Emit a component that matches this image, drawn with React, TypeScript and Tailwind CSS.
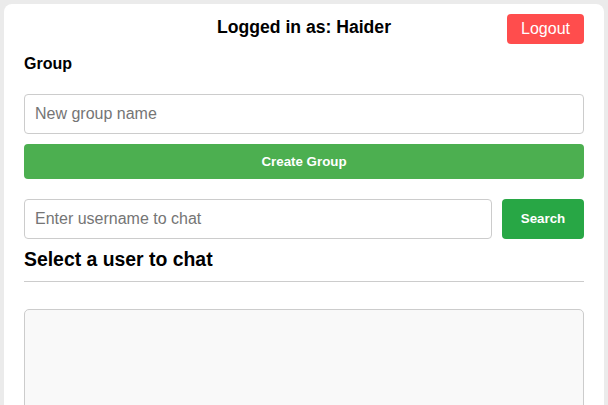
export default function App() {
  return (
    <div className="h-[405px] overflow-hidden bg-[#ebebeb] px-[4px] pt-[4px]" style={{ fontFamily: '"Liberation Sans", Arial, sans-serif' }}>
      <div className="h-[401px] rounded-t-[8px] bg-white px-[20px] pt-[10px]">
        <div className="grid grid-cols-[1fr_auto_1fr] items-start">
          <div />
          <h2 className="m-0 mt-[3px] text-[17.6px] font-bold leading-[21px] text-black">Logged in as: Haider</h2>
          <div className="flex justify-end">
            <button className="h-[30px] w-[77px] rounded-[4px] bg-[#ff4d4d] text-[16px] leading-[18px] text-white">Logout</button>
          </div>
        </div>
        <h3 className="mt-[11px] text-[16px] font-bold leading-[18px] text-black">Group</h3>
        <input
          className="mt-[21px] block h-[40px] w-full rounded-[4px] border border-[#cccccc] px-[10px] text-[16px] text-black outline-none placeholder:text-[#757575]"
          placeholder="New group name"
        />
        <button className="mt-[10px] block h-[35px] w-full rounded-[4px] bg-[#4caf50] text-[13.333px] font-bold text-white">Create Group</button>
        <div className="mt-[20px] flex gap-[10px]">
          <input
            className="block h-[40px] flex-1 rounded-[4px] border border-[#cccccc] px-[10px] text-[16px] text-black outline-none placeholder:text-[#757575]"
            placeholder="Enter username to chat"
          />
          <button className="h-[40px] w-[82px] rounded-[4px] bg-[#28a745] text-[13.333px] font-bold text-white">Search</button>
        </div>
        <h3 className="mt-[9px] text-[19.4px] font-bold leading-[23px] text-black">Select a user to chat</h3>
        <hr className="mt-[10px] border-0 border-t border-[#cccccc]" />
        <div className="mt-[27px] h-[120px] rounded-[5px] border border-[#cccccc] bg-[#f9f9f9]" />
      </div>
    </div>
  );
}
